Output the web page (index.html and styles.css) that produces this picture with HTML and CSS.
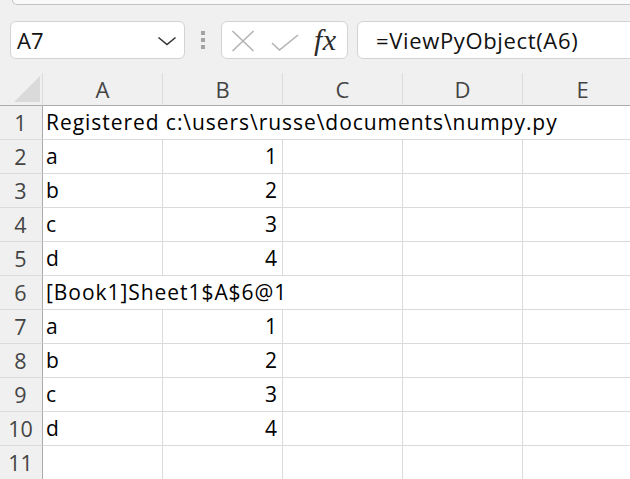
FILE: index.html
```html
<!DOCTYPE html>
<html lang="en">
<head>
<meta charset="utf-8">
<title>Sheet</title>
<link rel="stylesheet" href="styles.css">
</head>
<body>
<div class="app">
  <div class="ribbon"></div>
  <div class="fbar">
    <div class="namebox">
      <span class="ref">A7</span>
      <svg class="chev" width="20" height="10" viewBox="0 0 20 10"><path d="M1.5 1.5 L10 8.5 L18.5 1.5" fill="none" stroke="#333" stroke-width="1.6"/></svg>
    </div>
    <div class="grip"><i></i><i></i><i></i></div>
    <div class="fbtns">
      <svg class="ic-x" width="24" height="22" viewBox="0 0 24 22"><path d="M1.5 1 L22.5 21 M22.5 1 L1.5 21" fill="none" stroke="#b3b3b3" stroke-width="1.6"/></svg>
      <svg class="ic-ok" width="28" height="17" viewBox="0 0 28 17"><path d="M1 9 L8.5 16 L27 1" fill="none" stroke="#b3b3b3" stroke-width="1.6"/></svg>
      <span class="fx">fx</span>
    </div>
    <div class="formula">=ViewPyObject(A6)</div>
  </div>
  <div class="sheet">
    <div class="corner"><div class="tri"></div></div>
    <div class="ch">A</div><div class="ch">B</div><div class="ch">C</div><div class="ch">D</div><div class="ch">E</div>

    <div class="rh">1</div><div class="c span5">Registered c:\users\russe\documents\numpy.py</div>
    <div class="rh">2</div><div class="c">a</div><div class="c num">1</div><div class="c"></div><div class="c"></div><div class="c"></div>
    <div class="rh">3</div><div class="c">b</div><div class="c num">2</div><div class="c"></div><div class="c"></div><div class="c"></div>
    <div class="rh">4</div><div class="c">c</div><div class="c num">3</div><div class="c"></div><div class="c"></div><div class="c"></div>
    <div class="rh">5</div><div class="c">d</div><div class="c num">4</div><div class="c"></div><div class="c"></div><div class="c"></div>
    <div class="rh">6</div><div class="c span3">[Book1]Sheet1$A$6@1</div><div class="c"></div><div class="c"></div>
    <div class="rh">7</div><div class="c">a</div><div class="c num">1</div><div class="c"></div><div class="c"></div><div class="c"></div>
    <div class="rh">8</div><div class="c">b</div><div class="c num">2</div><div class="c"></div><div class="c"></div><div class="c"></div>
    <div class="rh">9</div><div class="c">c</div><div class="c num">3</div><div class="c"></div><div class="c"></div><div class="c"></div>
    <div class="rh">10</div><div class="c">d</div><div class="c num">4</div><div class="c"></div><div class="c"></div><div class="c"></div>
    <div class="rh">11</div><div class="c"></div><div class="c"></div><div class="c"></div><div class="c"></div><div class="c"></div>
  </div>
</div>
</body>
</html>
```

FILE: styles.css
```css
* { box-sizing: border-box; }
html, body {
  margin: 0;
  padding: 0;
  background: #f0f0f0;
  overflow: hidden;
}
.app {
  width: 630px;
  height: 479px;
  overflow: hidden;
  font-family: "Open Sans", "Noto Sans", sans-serif;
  color: #000;
}
.ribbon {
  margin-left: 12px;
  width: 640px;
  height: 5px;
  background: #f9f9f9;
  border-left: 1px solid #c4c4c4;
  border-bottom: 1.5px solid #c4c4c4;
  border-bottom-left-radius: 8px;
}
.fbar {
  display: flex;
  align-items: center;
  height: 38px;
  margin-top: 16px;
  padding-left: 10px;
}
.namebox {
  width: 175px;
  height: 38px;
  flex: none;
  background: #fff;
  border: 1px solid #d3d3d3;
  border-radius: 6px;
  display: flex;
  align-items: center;
  justify-content: space-between;
  padding: 0 7px 0 6px;
}
.ref {
  font-size: 22px;
  line-height: 36px;
  color: #111;
}
.chev { display: block; margin-top: 1px; }
.grip {
  width: 4px;
  margin: 0 16px 0 16px;
  display: flex;
  flex-direction: column;
  gap: 3.5px;
  flex: none;
}
.grip i {
  display: block;
  width: 4px;
  height: 3.5px;
  background: #a3a3a3;
}
.fbtns {
  width: 127px;
  height: 38px;
  flex: none;
  background: #fff;
  border: 1px solid #d3d3d3;
  border-radius: 6px;
  display: flex;
  align-items: center;
  padding-left: 9px;
}
.ic-x { display: block; margin-top: 2px; }
.ic-ok { display: block; margin-left: 16px; margin-top: 4px; }
.fx {
  font-family: "Liberation Serif", "DejaVu Serif", serif;
  font-style: italic;
  font-size: 30px;
  line-height: 36px;
  color: #2b2b2b;
  margin-left: 15px;
  letter-spacing: 0.5px;
}
.formula {
  margin-left: 9px;
  flex: none;
  width: 320px;
  height: 38px;
  background: #fff;
  border: 1px solid #d3d3d3;
  border-radius: 6px;
  padding-left: 18px;
  font-size: 22px;
  line-height: 36px;
  letter-spacing: 0.65px;
  color: #111;
  white-space: nowrap;
}
.sheet {
  margin-top: 14px;
  display: grid;
  grid-template-columns: 43px repeat(5, 120px);
  grid-template-rows: 33px;
  grid-auto-rows: 34px;
  background: #fff;
}
.corner, .ch {
  background: #f0f0f0;
  border-right: 1px solid #dcdcdc;
  border-bottom: 1px solid #ababab;
}
.corner {
  display: flex;
  align-items: flex-end;
  justify-content: flex-end;
  padding: 0 2px 3px 0;
}
.tri {
  width: 26px;
  height: 26px;
  background: #dadada;
  clip-path: polygon(100% 0, 100% 100%, 0 100%);
}
.ch {
  text-align: center;
  font-size: 22px;
  line-height: 32px;
  color: #444;
}
.rh {
  background: #f0f0f0;
  border-right: 1px solid #ababab;
  border-bottom: 1px solid #dcdcdc;
  text-align: center;
  font-size: 21.5px;
  line-height: 34px;
  color: #444;
  padding-right: 1px;
}
.c {
  border-right: 1px solid #dadada;
  border-bottom: 1px solid #dadada;
  font-size: 21px;
  line-height: 33px;
  letter-spacing: 0.95px;
  padding: 0 5px 0 3px;
  white-space: nowrap;
  overflow: visible;
}
.num { text-align: right; padding-right: 4px; }
.span5 { grid-column: span 5; }
.span3 { grid-column: span 3; }
```
